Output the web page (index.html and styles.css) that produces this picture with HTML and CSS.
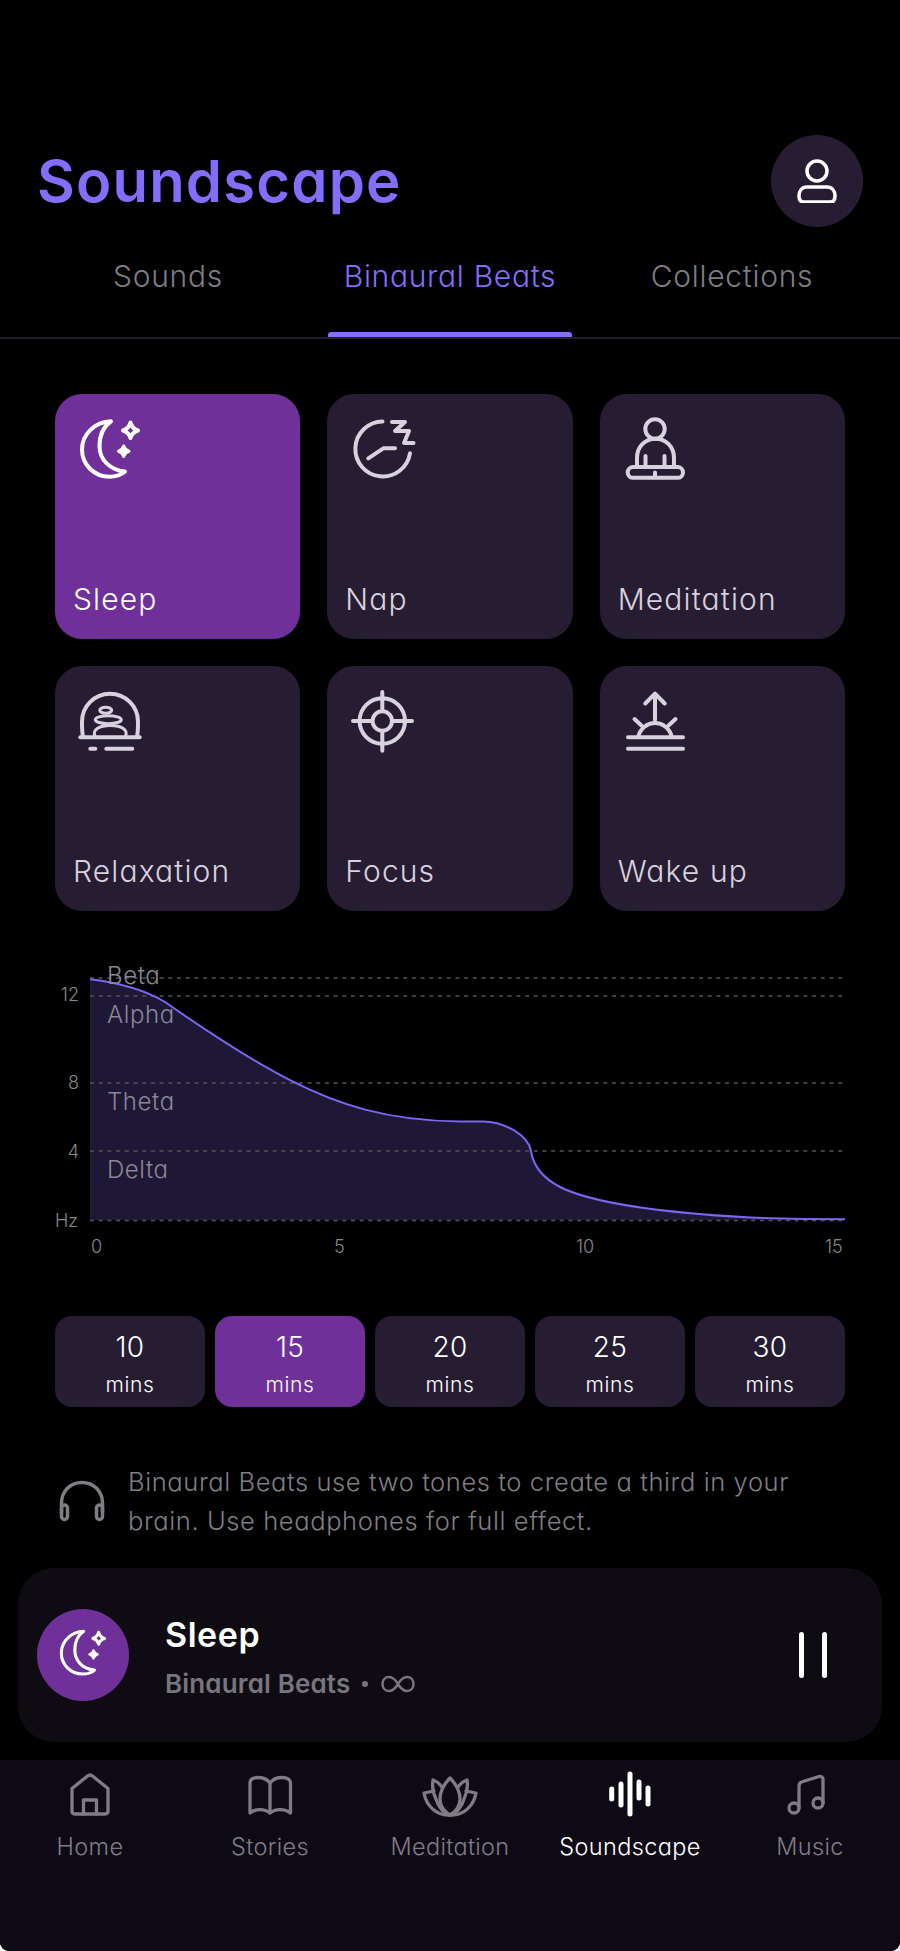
FILE: index.html
```html
<!DOCTYPE html>
<html lang="en">
<head>
<meta charset="utf-8">
<title>Soundscape</title>
<link rel="stylesheet" href="styles.css">
</head>
<body>
<svg class="defs" width="0" height="0" aria-hidden="true">
  <symbol id="moon" viewBox="4 0 70 70" overflow="visible">
    <path class="ln" d="M36 4.300C20 5 7 17 7 32.500C7 47.500 19 59.700 34.500 59.700C40.500 59.700 46 58 50 54.500C35 53 24.500 43 24.500 29C24.500 18.500 28.500 9.500 36 4.300Z"/>
    <path class="ln" d="M55.500 5.500Q56.800 11.500 63 13.500Q56.800 15.500 55.500 21Q54 15.500 48 13.500Q54 11.500 55.500 5.500Z"/>
    <path class="fill" d="M48.700 29Q50 33 54 34.200Q50 35.500 48.700 39.500Q47.500 35.500 43.500 34.200Q47.500 33 48.700 29Z"/>
  </symbol>
</svg>
<div class="app">
  <header class="top">
    <h1 class="title">Soundscape</h1>
    <div class="avatar">
      <svg class="avatar-icon" viewBox="0 0 44 44"><circle class="ln" cx="22" cy="12" r="10"/><path class="ln" d="M12 28H32C37 28 40 32 40 37C40 41 38 43 35 43H9C6 43 4 41 4 37C4 32 7 28 12 28Z"/></svg>
    </div>
  </header>

  <nav class="tabs">
    <div class="tab">Sounds</div>
    <div class="tab tab-on">Binaural Beats<span class="tab-bar"></span></div>
    <div class="tab">Collections</div>
  </nav>

  <section class="modes">
    <div class="mode mode-on">
      <svg class="mode-icon"><use href="#moon"/></svg>
      <span class="mode-label">Sleep</span>
    </div>
    <div class="mode">
      <svg class="mode-icon" viewBox="0 0 70 70"><path class="ln" d="M31.500 4.500A27.500 27.500 0 1 0 59 36.300"/><path class="ln" d="M17.300 41.300L32.300 31.300H44"/><path class="ln" d="M41 5H54L44 14H58L53 26H62.500"/></svg>
      <span class="mode-label">Nap</span>
    </div>
    <div class="mode">
      <svg class="mode-icon" viewBox="-1 0 70 70"><circle class="ln" cx="30" cy="12" r="9.700"/><path class="ln" d="M12 50V41C12 30 20 21.700 30.500 21.700C41 21.700 49 30 49 41V50"/><path class="ln" d="M20.500 39V50M39.500 39V50M30 55.500V60"/><rect class="ln" x="2.700" y="50" width="55.300" height="10.800" rx="5.400"/></svg>
      <span class="mode-label">Meditation</span>
    </div>
    <div class="mode">
      <svg class="mode-icon" viewBox="4 0 70 70"><path class="ln" d="M8 47C7 44 7 40 7 32.700A28 28 0 0 1 63 32.700C63 40 63 44 62 47"/><path class="ln" d="M5.300 48.300H64.700"/><path class="ln" d="M15.300 59.700H20.300M31.300 59.700H57.300"/><path class="ln thin" d="M20 47C17 41 24 36.500 35.300 36.500C46.500 36.500 53.500 41 50.500 47"/><ellipse class="ln thin" cx="33.300" cy="30.700" rx="13" ry="4"/><ellipse class="ln thin" cx="30.700" cy="21.300" rx="6" ry="3"/></svg>
      <span class="mode-label">Relaxation</span>
    </div>
    <div class="mode">
      <svg class="mode-icon" viewBox="0 0 70 70"><circle class="ln" cx="31.300" cy="32" r="22.700"/><circle class="ln" cx="31.300" cy="32" r="9.700"/><path class="ln" d="M31.300 3V21M31.300 43V61.700M2 32H20.500M42 32H61"/></svg>
      <span class="mode-label">Focus</span>
    </div>
    <div class="mode">
      <svg class="mode-icon" viewBox="-1 0 70 70"><path class="ln" d="M30 31V5.500M20.300 14.500L30 4.700L39.700 14.500"/><path class="ln" d="M13.500 47A17 17 0 0 1 46.500 47"/><path class="ln" d="M9.500 30L16.700 36.700M50.500 30L43.300 36.700"/><path class="ln" d="M3 48.300H58M3 59.700H58"/></svg>
      <span class="mode-label">Wake up</span>
    </div>
  </section>

  <svg class="chart" viewBox="0 960 900 300" width="900" height="300">
    <path class="area" d="M90 979.300C120 983 145 990 165 1002C205 1030 250 1060 293 1081.700C335 1103 385 1121 460 1121.500H483C505 1122 528 1135 531 1151C533 1165 541 1177 560 1187C590 1202 650 1212 750 1217.500C790 1219 820 1219.300 845 1219.300V1220H90Z"/>
    <g class="grid">
      <path d="M90 978H845M90 996H845M90 1083H845M90 1151H845M90 1220.500H845"/>
    </g>
    <path class="curve" d="M90 979.300C120 983 145 990 165 1002C205 1030 250 1060 293 1081.700C335 1103 385 1121 460 1121.500H483C505 1122 528 1135 531 1151C533 1165 541 1177 560 1187C590 1202 650 1212 750 1217.500C790 1219 820 1219.300 845 1219.300"/>
    <g class="band">
      <text x="107" y="984">Beta</text>
      <text x="107" y="1023">Alpha</text>
      <text x="107" y="1110">Theta</text>
      <text x="107" y="1178">Delta</text>
    </g>
    <g class="axis">
      <text class="end" x="79" y="1001">12</text>
      <text class="end" x="79" y="1089">8</text>
      <text class="end" x="79" y="1158">4</text>
      <text class="end" x="78" y="1227">Hz</text>
      <text x="91" y="1253">0</text>
      <text x="334" y="1253">5</text>
      <text x="576" y="1253">10</text>
      <text x="825" y="1253">15</text>
    </g>
  </svg>

  <section class="times">
    <div class="time"><span class="time-num">10</span><span class="time-unit">mins</span></div>
    <div class="time time-on"><span class="time-num">15</span><span class="time-unit">mins</span></div>
    <div class="time"><span class="time-num">20</span><span class="time-unit">mins</span></div>
    <div class="time"><span class="time-num">25</span><span class="time-unit">mins</span></div>
    <div class="time"><span class="time-num">30</span><span class="time-unit">mins</span></div>
  </section>

  <section class="note">
    <svg class="note-icon" viewBox="0 0 48 42"><path class="ln" d="M3.500 32V23C3.500 11 12.500 2.500 24 2.500C35.500 2.500 44.500 11 44.500 23V32"/><rect class="ln" x="3.500" y="25" width="6" height="14.500" rx="3"/><rect class="ln" x="38.500" y="25" width="6" height="14.500" rx="3"/></svg>
    <p class="note-text">Binaural Beats use two tones to create a third in your brain. Use headphones for full effect.</p>
  </section>

  <section class="player">
    <div class="disc"><svg class="disc-icon"><use href="#moon"/></svg></div>
    <div class="player-text">
      <div class="player-title">Sleep</div>
      <div class="player-sub">Binaural Beats<span class="dot"></span><svg class="inf" viewBox="0 0 34 18"><path class="ln" d="M17 9C14 4 11 2 8 2C4 2 1.500 5 1.500 9C1.500 13 4 16 8 16C11 16 14 14 17 9C20 4 23 2 26 2C30 2 32.500 5 32.500 9C32.500 13 30 16 26 16C23 16 20 14 17 9Z"/></svg></div>
    </div>
    <div class="pause"><span class="pause-bar"></span><span class="pause-bar"></span></div>
  </section>

  <nav class="bottom">
    <div class="item">
      <svg class="item-icon" viewBox="0 0 48 48"><path class="ln" d="M6 17.500L21.500 5C23 3.700 25 3.700 26.500 5L42 17.500V40C42 42 41 43 39 43H9C7 43 6 42 6 40Z"/><path class="ln" d="M17.500 43V29H30.500V43"/></svg>
      <span>Home</span>
    </div>
    <div class="item">
      <svg class="item-icon" viewBox="0 0 48 48"><path class="ln" d="M24 12C21 8 16 6.500 12 6.500C7 6.500 4 8.500 4 12V42C9 37.500 19 37.500 24 42C29 37.500 39 37.500 44.500 42V12C44.500 8.500 41 6.500 36 6.500C32 6.500 27 8 24 12ZM24 12V42"/></svg>
      <span>Stories</span>
    </div>
    <div class="item">
      <svg class="item-icon" viewBox="0 0 48 48"><path class="ln" d="M24 7C18 13 14 20 14 28C14 36 19 41 24 44C29 41 34 36 34 28C34 20 30 13 24 7Z"/><path class="ln" d="M16 16C13 12 10 10 7 9C6 15 7 22 10 28C12 35 17 42 24 44"/><path class="ln" d="M32 16C35 12 38 10 41 9C42 15 41 22 38 28C36 35 31 42 24 44"/><path class="ln" d="M8 20L-2 22C0 34 10 45 24 44C38 45 48 34 50 22L40 20"/></svg>
      <span>Meditation</span>
    </div>
    <div class="item item-on">
      <svg class="item-icon" viewBox="0 0 48 48"><path class="ln wide" d="M5.700 18V28M15 13V34M24 3V43M33 11V27M42 17V33"/></svg>
      <span>Soundscape</span>
    </div>
    <div class="item">
      <svg class="item-icon" viewBox="0 0 48 48"><circle class="ln" cx="8" cy="37" r="5"/><circle class="ln" cx="32" cy="32" r="5"/><path class="ln" d="M13 37V15C13 12.500 14.500 11 17 10.500L33 5.500C35.500 5 37 6.500 37 8.500V32"/></svg>
      <span>Music</span>
    </div>
  </nav>
</div>
</body>
</html>
```

FILE: styles.css
```css
* { box-sizing: border-box; margin: 0; padding: 0; }
html, body { width: 900px; height: 1951px; background: #fff; overflow: hidden; }
body { font-family: Inter, "Noto Sans", sans-serif; font-feature-settings: "cv11" 1; }
.defs { position: absolute; }
.ln { fill: none; stroke: currentColor; stroke-width: 4; stroke-linecap: round; stroke-linejoin: round; }
.thin { stroke-width: 3; }
.fill { fill: currentColor; stroke: currentColor; stroke-width: 3; stroke-linejoin: round; }
.app { width: 900px; height: 1951px; background: #000; display: flex; flex-direction: column; border-radius: 0 0 9px 9px; overflow: hidden; }

.top { display: flex; justify-content: space-between; align-items: center; padding: 135px 37px 0 37px; }
.title { font-size: 58px; line-height: 92px; font-weight: 600; color: #846dfb; letter-spacing: 1.2px; }
.avatar { width: 92px; height: 92px; border-radius: 50%; background: #261d33; display: flex; align-items: center; justify-content: center; color: #fff; }
.avatar-icon { width: 44px; height: 44px; }
.avatar-icon .ln { stroke-width: 3.5; }

.tabs { display: grid; grid-template-columns: 336px 228px 336px; height: 112px; border-bottom: 2px solid #251c31; padding-top: 27px; }
.tab { position: relative; font-size: 30px; line-height: 44px; font-weight: 300; color: #7f7c85; text-align: center; letter-spacing: 0.7px; }
.tab-on { color: #846dfb; }
.tab-bar { position: absolute; left: -8px; right: -8px; height: 5px; border-radius: 3px 3px 0 0; background: #846dfb; top: 78px; }

.modes { display: grid; grid-template-columns: repeat(3, 1fr); gap: 27px; padding: 55px 55px 0; }
.mode { height: 245px; border-radius: 27px; background: #261d33; color: #d8d1de; padding: 23px 0 20px 18px; display: flex; flex-direction: column; justify-content: space-between; }
.mode-on { background: #6f3199; color: #fff; }
.mode-icon { width: 70px; height: 70px; margin-left: 6px; overflow: visible; }
.mode-label { font-size: 30px; line-height: 40px; font-weight: 300; letter-spacing: 1.15px; }

.chart { display: block; margin-top: 49px; }
.area { fill: #1e1735; }
.grid path { fill: none; stroke: #55525a; stroke-width: 1.5; stroke-dasharray: 4 4.700; }
.curve { fill: none; stroke: #7c66f0; stroke-width: 2; }
.band text { font-size: 24px; font-weight: 300; fill: #8b8794; letter-spacing: 0.6px; }
.axis text { font-size: 18px; font-weight: 300; fill: #8a878f; }
.axis .end { text-anchor: end; }

.times { display: grid; grid-template-columns: repeat(5, 150px); gap: 10px; padding: 56px 55px 0; }
.time { height: 91px; border-radius: 17px; background: #261d33; color: #fff; display: flex; flex-direction: column; align-items: center; padding-top: 14px; }
.time-num { font-size: 28px; line-height: 34px; font-weight: 300; letter-spacing: 0.3px; }
.time-unit { font-size: 21px; line-height: 24px; margin-top: 9px; font-weight: 300; letter-spacing: 0.6px; }
.time-on { background: #6f3199; }

.note { display: flex; align-items: center; padding: 55px 40px 0 58px; gap: 22px; color: #807d85; }
.note-icon { width: 48px; height: 42px; flex: none; }
.note-icon .ln { stroke-width: 3.5; }
.note-text { font-size: 25.5px; line-height: 39px; font-weight: 300; letter-spacing: 0.6px; }

.player { width: 864px; height: 174px; margin: 28px 0 0 18px; border-radius: 36px; background: #0e0c12; display: flex; align-items: center; padding: 0 55px 0 19px; color: #fff; }
.disc { width: 92px; height: 92px; border-radius: 50%; background: #6f3199; display: flex; align-items: center; justify-content: center; flex: none; }
.disc-icon { width: 54px; height: 54px; margin-left: 6px; overflow: visible; }
.player-text { margin-left: 36px; flex: 1; padding-top: 4px; }
.player-title { font-size: 34px; line-height: 44px; font-weight: 600; letter-spacing: 0.55px; }
.player-sub { display: flex; align-items: center; font-size: 26px; line-height: 34px; font-weight: 600; color: #78757e; margin-top: 10px; letter-spacing: 0.15px; }
.dot { width: 6px; height: 6px; border-radius: 50%; background: #78757e; margin: 0 13px 0 12px; }
.inf { width: 34px; height: 18px; }
.inf .ln { stroke-width: 2.5; }
.pause { display: flex; gap: 18px; }
.pause-bar { width: 5px; height: 46px; border-radius: 3px; background: #fff; }

.bottom { flex: 1; margin-top: 18px; background: #0e0a15; display: grid; grid-template-columns: repeat(5, 180px); padding-top: 11px; align-content: start; }
.item { display: flex; flex-direction: column; align-items: center; color: #807c86; font-size: 23.5px; line-height: 32px; font-weight: 300; letter-spacing: 0.35px; }
.item-icon { width: 48px; height: 48px; overflow: visible; margin-bottom: 12px; }
.item-icon .ln { stroke-width: 3.3; }
.item-icon .wide { stroke-width: 5; }
.item-on { color: #fff; }
```
